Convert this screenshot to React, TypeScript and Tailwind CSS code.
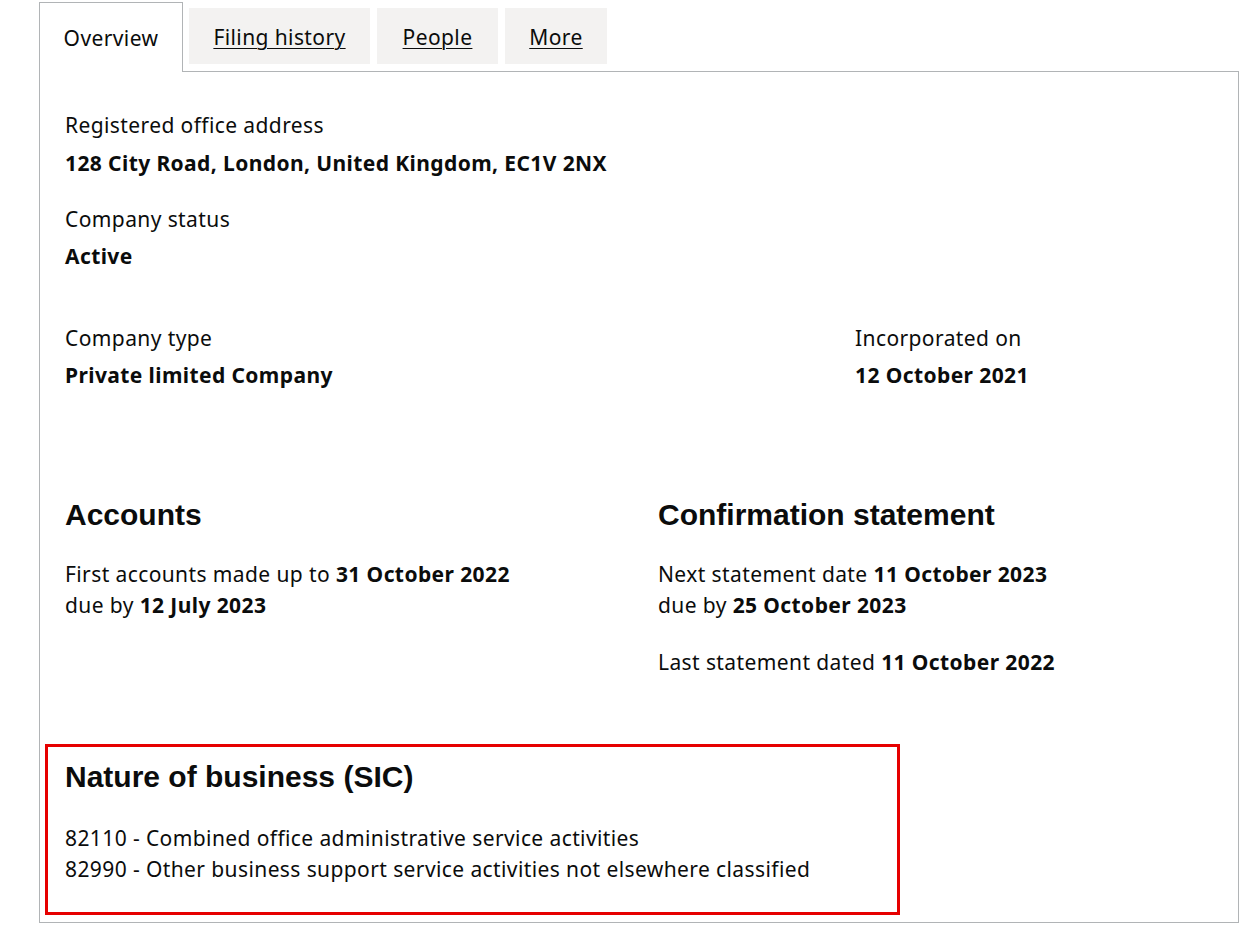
export default function App() {
  const body = "font-['Noto_Sans','Open_Sans',sans-serif] text-[21px] leading-[30px] tracking-[0.4px] text-[#0b0c0c]";
  const heading = "font-['Liberation_Sans',Arial,sans-serif] font-bold text-[30px] leading-[35px] tracking-normal text-[#0b0c0c]";

  return (
    <div className="min-h-screen bg-white pt-[2px] pl-[39px]">
      <div className="w-[1200px]">
        {/* tabs */}
        <div className={`flex items-start ${body}`}>
          <div className="relative z-10 -mb-px flex h-[70px] w-[144px] items-start justify-center pt-[20px] border-l border-t border-r border-[#b1b4b6] bg-white">
            Overview
          </div>
          <a href="#" className="ml-[6px] mt-[6px] flex h-[56px] w-[181px] items-start justify-center pt-[14px] bg-[#f3f2f1] underline underline-offset-[3px] decoration-1">
            Filing history
          </a>
          <a href="#" className="ml-[7px] mt-[6px] flex h-[56px] w-[121px] items-start justify-center pt-[14px] bg-[#f3f2f1] underline underline-offset-[3px] decoration-1">
            People
          </a>
          <a href="#" className="ml-[7px] mt-[6px] flex h-[56px] w-[102px] items-start justify-center pt-[14px] bg-[#f3f2f1] underline underline-offset-[3px] decoration-1">
            More
          </a>
        </div>

        {/* panel */}
        <div className={`border border-[#b1b4b6] pt-[38px] pb-[7px] pl-[5px] ${body}`}>
          <div className="pl-[20px]">
            <div>Registered office address</div>
            <div className="mt-[8px] font-bold">128 City Road, London, United Kingdom, EC1V 2NX</div>

            <div className="mt-[26px]">Company status</div>
            <div className="mt-[7px] font-bold">Active</div>

            <div className="mt-[52px] grid grid-cols-[790px_1fr]">
              <div>
                <div>Company type</div>
                <div className="mt-[7px] font-bold">Private limited Company</div>
              </div>
              <div>
                <div>Incorporated on</div>
                <div className="mt-[7px] font-bold">12 October 2021</div>
              </div>
            </div>

            <div className="mt-[107px] grid grid-cols-[593px_1fr]">
              <div>
                <h2 className={heading}>Accounts</h2>
                <p className="mt-[27px] leading-[31px]">
                  First accounts made up to <strong>31 October 2022</strong>
                  <br />
                  due by <strong>12 July 2023</strong>
                </p>
              </div>
              <div>
                <h2 className={heading}>Confirmation statement</h2>
                <p className="mt-[27px] leading-[31px]">
                  Next statement date <strong>11 October 2023</strong>
                  <br />
                  due by <strong>25 October 2023</strong>
                </p>
                <p className="mt-[26px] leading-[31px]">
                  Last statement dated <strong>11 October 2022</strong>
                </p>
              </div>
            </div>
          </div>

          <div className="mt-[66px] w-[855px] border-[3px] border-[#e60000] pt-[12px] pb-[27px] pl-[17px]">
            <h2 className={heading}>Nature of business (SIC)</h2>
            <ul className="mt-[29px] leading-[31px]">
              <li>82110 - Combined office administrative service activities</li>
              <li>82990 - Other business support service activities not elsewhere classified</li>
            </ul>
          </div>
        </div>
      </div>
    </div>
  );
}
